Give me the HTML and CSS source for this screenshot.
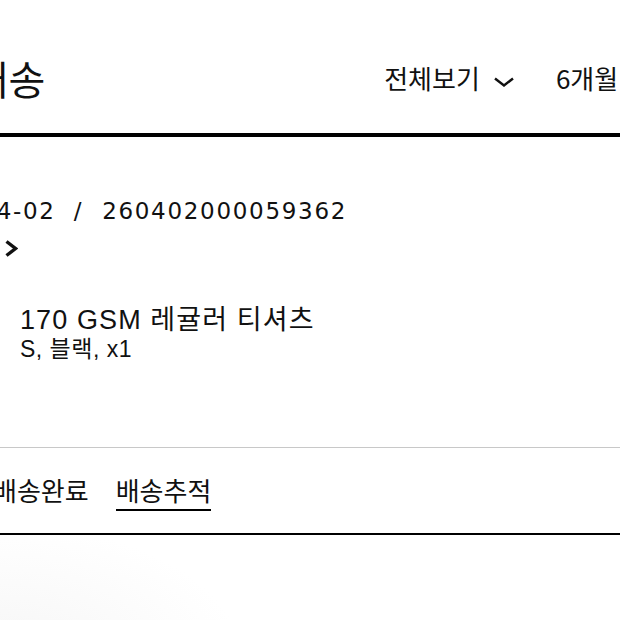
FILE: index.html
```html
<!DOCTYPE html>
<html lang="ko">
<head>
<meta charset="utf-8">
<title>주문배송</title>
<link rel="stylesheet" href="styles.css">
</head>
<body>
<div class="screen">
  <header class="header">
    <h1 class="title">주문배송</h1>
    <div class="filters">
      <button class="filter">
        <span>전체보기</span>
        <svg class="down" width="22" height="10" viewBox="0 0 22 10"><path d="M2 1.5 L11 8.5 L20 1.5" fill="none" stroke="#111" stroke-width="2.4"/></svg>
      </button>
      <button class="filter">
        <span>6개월</span>
        <svg class="down" width="22" height="10" viewBox="0 0 22 10"><path d="M2 1.5 L11 8.5 L20 1.5" fill="none" stroke="#111" stroke-width="2.4"/></svg>
      </button>
    </div>
  </header>

  <section class="order">
    <div class="order-meta">
      <span class="date">2026-04-02</span>
      <span class="slash">/</span>
      <span class="ordno">260402000059362</span>
    </div>
    <a class="detail" href="#">
      <span class="detail-text">주문상세</span>
      <svg class="right" width="14" height="18" viewBox="0 0 14 18"><path d="M2.5 2.5 L11.5 9.5 L2.5 16.5" fill="none" stroke="#111" stroke-width="3.4"/></svg>
    </a>
    <div class="product">
      <div class="thumb"></div>
      <div class="product-info">
        <div class="product-name">170 GSM 레귤러 티셔츠</div>
        <div class="product-opt">S, 블랙, x1</div>
      </div>
    </div>
  </section>

  <div class="status-row">
    <span class="status">배송완료</span>
    <a class="track" href="#">배송추적</a>
  </div>

  <div class="below"></div>
</div>
</body>
</html>
```

FILE: styles.css
```css
html, body {
  margin: 0;
  padding: 0;
  overflow: hidden;
  background: #fff;
  width: 620px;
  height: 620px;
}
body {
  font-family: "Noto Sans CJK KR", "Noto Sans", sans-serif;
  color: #111;
}
.screen {
  width: 900px;
  margin-left: -160px;
}
.header {
  display: flex;
  align-items: center;
  height: 50px;
  padding: 53px 0 30px 58px;
  border-bottom: 4px solid #000;
}
.title {
  margin: 0;
  font-size: 40px;
  font-weight: 400;
  line-height: 50px;
  white-space: nowrap;
}
.filters {
  margin-left: 339px;
  display: flex;
  gap: 41px;
}
.filter {
  display: flex;
  align-items: center;
  gap: 13px;
  border: 0;
  background: none;
  padding: 0;
  font-family: "Noto Sans CJK KR", sans-serif;
  font-size: 26px;
  line-height: 50px;
  color: #111;
  white-space: nowrap;
}
.down {
  margin-top: 8px;
}
.order {
  padding: 61px 0 0 63px;
  border-bottom: 1px solid #c8c8c8;
}
.order-meta {
  display: flex;
  margin-left: 2px;
  font-family: "DejaVu Sans", sans-serif;
  font-size: 23px;
  line-height: 27px;
  letter-spacing: 1.7px;
  color: #111;
}
.slash {
  margin: 0 19px 0 18px;
}
.detail {
  display: flex;
  align-items: center;
  height: 18px;
  margin-top: 14px;
  color: #111;
  text-decoration: none;
}
.detail-text {
  font-size: 20px;
  line-height: 18px;
  width: 80px;
  margin-right: 21px;
}
.product {
  display: flex;
  margin-top: 49px;
  padding-bottom: 83px;
}
.thumb {
  width: 117px;
  flex: none;
}
.product-info {
  font-family: "Liberation Sans", "Noto Sans CJK KR", sans-serif;
  white-space: nowrap;
}
.product-name {
  font-size: 27px;
  line-height: 28px;
  letter-spacing: 1.1px;
}
.product-opt {
  font-size: 23px;
  line-height: 30px;
  letter-spacing: 0.5px;
}
.status-row {
  display: flex;
  align-items: flex-start;
  gap: 27px;
  padding: 27px 0 22px 153px;
  border-bottom: 2px solid #000;
  font-size: 26px;
  line-height: 30px;
}
.track {
  color: #111;
  text-decoration: none;
  padding-bottom: 4px;
  border-bottom: 2px solid #000;
}
.below {
  height: 120px;
  background: radial-gradient(ellipse 240px 130px at 160px 120px, #f6f6f6 0%, #fff 100%);
}
```
